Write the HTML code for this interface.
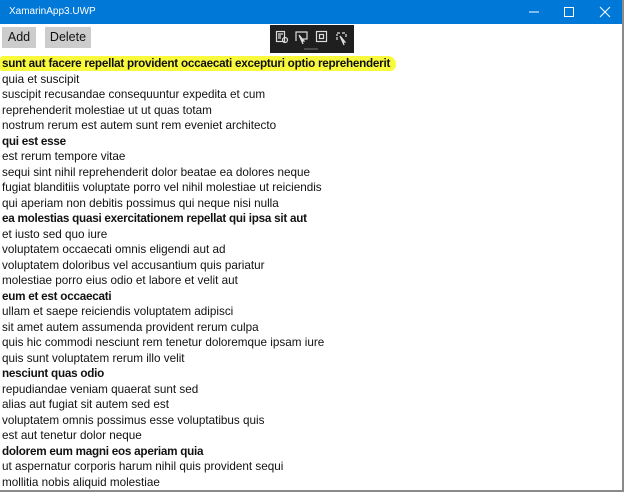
<!DOCTYPE html>
<html><head><style>
html,body{margin:0;padding:0;}
body{width:624px;height:492px;position:relative;overflow:hidden;background:#fff;font-family:"Liberation Sans",sans-serif;}
.frame{position:absolute;left:0;top:0;width:622px;height:490px;border-right:2px solid #8a8a8a;border-bottom:2px solid #8a8a8a;}
.title{position:absolute;left:0;top:0;width:622px;height:24px;background:#0078d7;color:#fff;font-size:10px;line-height:24px;}
.title span{position:absolute;left:9px;}
.ctl{position:absolute;top:0;height:24px;width:46px;color:#fff;text-align:center;}
.btn{position:absolute;top:27px;height:21px;background:#ccc;font-size:12.5px;line-height:21px;text-align:center;color:#111;}
.tb{position:absolute;left:270px;top:25px;width:84px;height:28px;background:#1f1f1f;}
.hl{position:absolute;left:0;top:56px;width:396px;height:15px;background:#fafa3c;border-radius:3px 8px 6px 2px;}
.txt{position:absolute;left:2px;top:56px;font-size:11.7px;line-height:15.52px;color:#111;white-space:nowrap;}
b{font-weight:bold;letter-spacing:-0.25px;}
</style></head><body>
<div class="frame"></div>
<div class="title"><span>XamarinApp3.UWP</span>
<div class="ctl" style="left:511px"><svg width="46" height="24"><line x1="18" y1="12" x2="28" y2="12" stroke="#fff"/></svg></div>
<div class="ctl" style="left:546px"><svg width="46" height="24"><rect x="18.5" y="7.5" width="9" height="9" fill="none" stroke="#fff"/></svg></div>
<div class="ctl" style="left:582px"><svg width="46" height="24"><path d="M18 7L28 17M28 7L18 17" stroke="#fff"/></svg></div>
</div>
<div class="btn" style="left:2px;width:34px">Add</div>
<div class="btn" style="left:45px;width:46px">Delete</div>
<div class="tb"><svg width="84" height="28" fill="none" stroke="#ddd" stroke-width="1.2">
<rect x="6.5" y="6.5" width="8" height="10"/><path d="M8 9h5M8 11h3M8 13h3"/><circle cx="15" cy="15" r="2.5"/>
<path d="M26 16V7h11v7h-4"/><path d="M29 10l5 6-2 0 1 3z" fill="#ddd"/>
<rect x="46.5" y="6.5" width="10" height="10"/><rect x="49.5" y="9.5" width="4" height="4"/>
<path d="M67 8h3M72 8h3M76 9v3M67 12v3M67 9v2"/><path d="M70 11l5 6-2 0 1 3z" fill="#ddd"/>
<line x1="34" y1="24" x2="48" y2="24" stroke="#666"/>
</svg></div>
<div class="hl"></div>
<div class="txt">
<b>sunt aut facere repellat provident occaecati excepturi optio reprehenderit</b><br>
quia et suscipit<br>
suscipit recusandae consequuntur expedita et cum<br>
reprehenderit molestiae ut ut quas totam<br>
nostrum rerum est autem sunt rem eveniet architecto<br>
<b>qui est esse</b><br>
est rerum tempore vitae<br>
sequi sint nihil reprehenderit dolor beatae ea dolores neque<br>
fugiat blanditiis voluptate porro vel nihil molestiae ut reiciendis<br>
qui aperiam non debitis possimus qui neque nisi nulla<br>
<b>ea molestias quasi exercitationem repellat qui ipsa sit aut</b><br>
et iusto sed quo iure<br>
voluptatem occaecati omnis eligendi aut ad<br>
voluptatem doloribus vel accusantium quis pariatur<br>
molestiae porro eius odio et labore et velit aut<br>
<b>eum et est occaecati</b><br>
ullam et saepe reiciendis voluptatem adipisci<br>
sit amet autem assumenda provident rerum culpa<br>
quis hic commodi nesciunt rem tenetur doloremque ipsam iure<br>
quis sunt voluptatem rerum illo velit<br>
<b>nesciunt quas odio</b><br>
repudiandae veniam quaerat sunt sed<br>
alias aut fugiat sit autem sed est<br>
voluptatem omnis possimus esse voluptatibus quis<br>
est aut tenetur dolor neque<br>
<b>dolorem eum magni eos aperiam quia</b><br>
ut aspernatur corporis harum nihil quis provident sequi<br>
mollitia nobis aliquid molestiae
</div>
</body></html>
